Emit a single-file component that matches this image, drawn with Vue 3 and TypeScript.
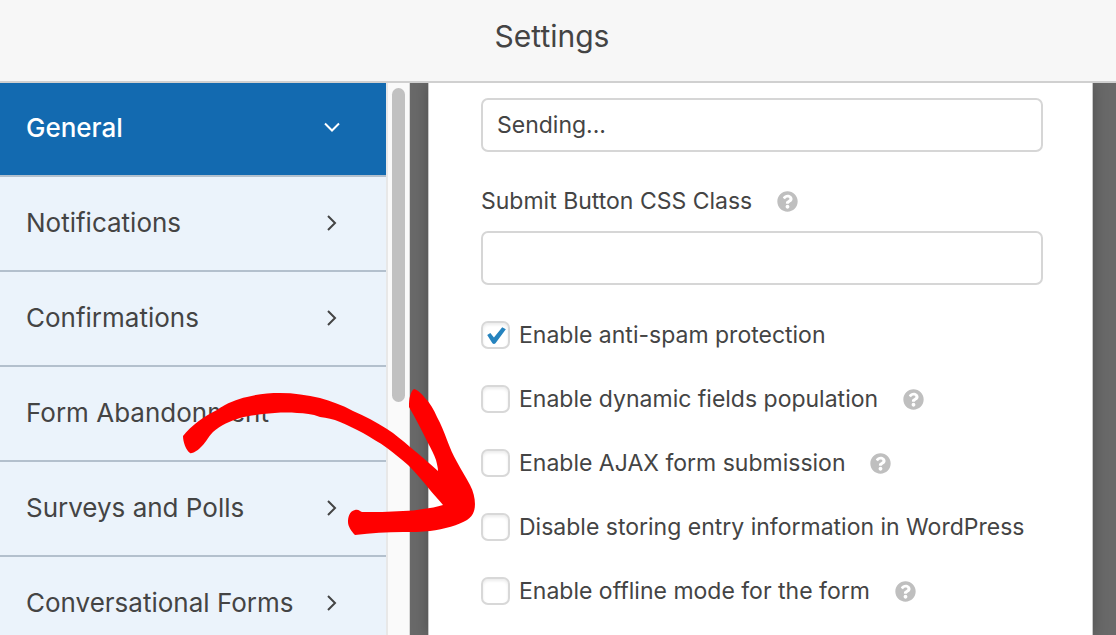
<script setup lang="ts">
import { ref } from 'vue'

interface Section {
  name: string
  chevron: boolean
}

interface Option {
  id: string
  label: string
  checked: boolean
  help: boolean
}

const sections: Section[] = [
  { name: 'General', chevron: true },
  { name: 'Notifications', chevron: true },
  { name: 'Confirmations', chevron: true },
  { name: 'Form Abandonment', chevron: false },
  { name: 'Surveys and Polls', chevron: true },
  { name: 'Conversational Forms', chevron: true },
]
const active = ref('General')
const processingText = ref('Sending...')
const cssClass = ref('')
const options = ref<Option[]>([
  { id: 'antispam', label: 'Enable anti-spam protection', checked: true, help: false },
  { id: 'dynamic', label: 'Enable dynamic fields population', checked: false, help: true },
  { id: 'ajax', label: 'Enable AJAX form submission', checked: false, help: true },
  { id: 'storage', label: 'Disable storing entry information in WordPress', checked: false, help: false },
  { id: 'offline', label: 'Enable offline mode for the form', checked: false, help: true },
])
const helpPath =
  'M504 256c0 137-111 248-248 248S8 393 8 256 119 8 256 8s248 111 248 248zM262.7 90c-54.5 0-89.300 23-116.500 63.800-3.500 5.300-2.400 12.400 2.700 16.300l34.700 26.300c5.200 3.900 12.600 3 16.700-2.100 17.900-22.700 30.100-35.800 57.300-35.800 20.400 0 45.700 13.100 45.700 33 0 15-12.400 22.700-32.500 34C247.100 238.500 216 254.900 216 296v4c0 6.600 5.400 12 12 12h56c6.600 0 12-5.400 12-12v-1.300c0-28.500 83.200-29.600 83.200-106.700 0-58-60.200-102-116.500-102zM256 338c-25.400 0-46 20.600-46 46s20.600 46 46 46 46-20.600 46-46-20.600-46-46-46z'
</script>

<template>
  <div class="page">
    <header class="topbar"><h1>Settings</h1></header>
    <div class="body">
      <nav class="sidebar" aria-label="Settings sections">
        <button
          v-for="s in sections"
          :key="s.name"
          type="button"
          class="section"
          :class="{ active: s.name === active }"
          @click="active = s.name"
        >
          <span>{{ s.name }}</span>
          <svg v-if="s.chevron" class="chevron" viewBox="0 0 20 20" aria-hidden="true">
            <path v-if="s.name === active" d="M3 6.500L10 13.500L17 6.500" />
            <path v-else d="M6 3L13 10L6 17" />
          </svg>
        </button>
      </nav>
      <div class="scrollbar"><div class="thumb"></div></div>
      <main class="backdrop">
        <form class="panel" @submit.prevent>
          <input v-model="processingText" class="field" type="text" aria-label="Submit button processing text" />
          <div class="caption">
            <label for="css-class">Submit Button CSS Class</label>
            <button type="button" class="help" aria-label="Help">
              <svg viewBox="0 0 512 512"><path :d="helpPath" /></svg>
            </button>
          </div>
          <input id="css-class" v-model="cssClass" class="field" type="text" />
          <div class="options">
            <div v-for="o in options" :key="o.id" class="option">
              <span class="box">
                <input :id="o.id" v-model="o.checked" type="checkbox" />
                <svg v-if="o.checked" class="tick" viewBox="0 0 28 28" aria-hidden="true">
                  <path d="M6 13.500L9 11.500L12.500 16L20.500 6L24 8L14 21.500C13 22.500 12 22.500 11 21.500Z" />
                </svg>
              </span>
              <label :for="o.id">{{ o.label }}</label>
              <button v-if="o.help" type="button" class="help" aria-label="Help">
                <svg viewBox="0 0 512 512"><path :d="helpPath" /></svg>
              </button>
            </div>
          </div>
        </form>
      </main>
    </div>
    <svg class="arrow" viewBox="0 0 300 150" aria-hidden="true">
      <path
        d="M3 46C11 36 24 26 37 20C47 13 57 9 67 7C78 4 89 3 100 3C114 3 127 5 140 8C151 11 162 15 173 21C185 26 196 32 207 39C215 44 223 51 230 57C240 65 249 73 258 81C258 78 257 74 256 70C254 64 251 59 248 53C242 41 236 29 229 17C229 9 230 2 234 -1C238 0 242 4 245 8C250 13 254 20 257 27C261 34 264 42 267 50C270 58 273 65 277 72C281 80 286 87 290 95C295 104 296 115 294 121C293 125 290 128 287 130C279 135 264 139 250 141C241 142 232 142 223 142C207 142 191 143 175 145C171 141 168 136 168 132C168 128 169 121 175 120C179 119 180 122 182 122C195 122 209 122 223 121C230 121 237 120 243 119C250 118 257 117 263 115C259 110 254 105 250 100C243 91 236 83 228 75C221 69 214 63 207 58C199 52 191 48 183 43C175 39 168 35 160 32C153 29 147 28 140 27C132 24 125 23 117 23C105 22 94 23 83 24C75 25 67 26 60 28C50 31 41 35 33 42C28 47 25 54 20 58C17 61 12 64 10 63C6 60 3 52 3 46Z"
      />
    </svg>
  </div>
</template>

<style>
body {
  margin: 0;
}
</style>

<style scoped>
.page {
  position: relative;
  display: flex;
  flex-direction: column;
  height: 100vh;
  overflow: hidden;
  color: #444;
  font-family: Inter, "Liberation Sans", sans-serif;
}
.page * {
  box-sizing: border-box;
}
button,
input {
  font: inherit;
  color: inherit;
}
.topbar {
  flex: none;
  padding: 16px 12px 25px 0;
  background: #f7f7f7;
  border-bottom: 2px solid #d0d0d0;
  text-align: center;
}
h1 {
  margin: 0;
  font-size: 30px;
  font-weight: 400;
  line-height: 40px;
}
.body {
  display: flex;
  flex: 1;
  min-height: 0;
}
.sidebar {
  display: flex;
  flex: none;
  flex-direction: column;
  width: 386px;
  overflow: hidden;
  background: #ebf3fb;
}
.section {
  display: flex;
  flex: none;
  align-items: center;
  justify-content: space-between;
  height: 95px;
  padding: 0 44px 2px 26px;
  background: none;
  border: 0;
  border-bottom: 2px solid #b3c0cd;
  font-size: 26px;
  text-align: left;
}
.section.active {
  height: 94px;
  padding-bottom: 4px;
  color: #fff;
  background: #136ab0;
}
.section.active span {
  font-weight: 500;
}
.chevron {
  width: 20px;
  height: 20px;
  fill: none;
  stroke: currentColor;
  stroke-width: 2;
}
.scrollbar {
  flex: none;
  width: 24px;
  padding: 5px 4px;
  background: #fafafa;
  border-left: 2px solid #e8e8e8;
  border-right: 1px solid #d8d8d8;
}
.thumb {
  width: 13px;
  height: 58%;
  background: #c1c1c1;
  border-radius: 7px;
}
.backdrop {
  display: flex;
  flex: 1;
  min-width: 0;
  padding: 0 23px 0 18px;
  overflow: hidden;
  background: #696969;
}
.panel {
  flex: 1;
  min-width: 0;
  padding: 15px 49px 0 52px;
  background: #fff;
  border: 1px solid #c8c8c8;
  border-width: 0 1px;
  box-shadow: 0 0 14px rgba(0, 0, 0, 0.25);
  font-size: 23px;
}
.field {
  display: block;
  width: 100%;
  height: 54px;
  padding: 0 14px;
  background: #fff;
  border: 2px solid #d6d6d6;
  border-radius: 7px;
  outline: none;
}
.caption {
  display: flex;
  align-items: center;
  height: 79px;
  padding-top: 19px;
}
.help {
  display: flex;
  flex: none;
  margin: 0 0 0 25px;
  padding: 0;
  background: none;
  border: 0;
}
.help svg {
  width: 21px;
  height: 21px;
  fill: #bfbfbf;
}
.options {
  padding-top: 18px;
}
.option {
  display: flex;
  align-items: center;
  height: 64px;
  white-space: nowrap;
}
.box {
  position: relative;
  display: flex;
  flex: none;
  margin-right: 9px;
}
.box input {
  width: 29px;
  height: 28px;
  margin: 0;
  appearance: none;
  background: #fff;
  border: 2px solid #d8d8d8;
  border-radius: 7px;
  box-shadow: inset 0 2px 3px rgba(0, 0, 0, 0.08);
}
.tick {
  position: absolute;
  inset: 0;
  fill: #2583be;
  pointer-events: none;
}
.arrow {
  position: absolute;
  top: 390px;
  left: 180px;
  width: 300px;
  height: 150px;
  overflow: visible;
  fill: #f00;
  pointer-events: none;
}
</style>
